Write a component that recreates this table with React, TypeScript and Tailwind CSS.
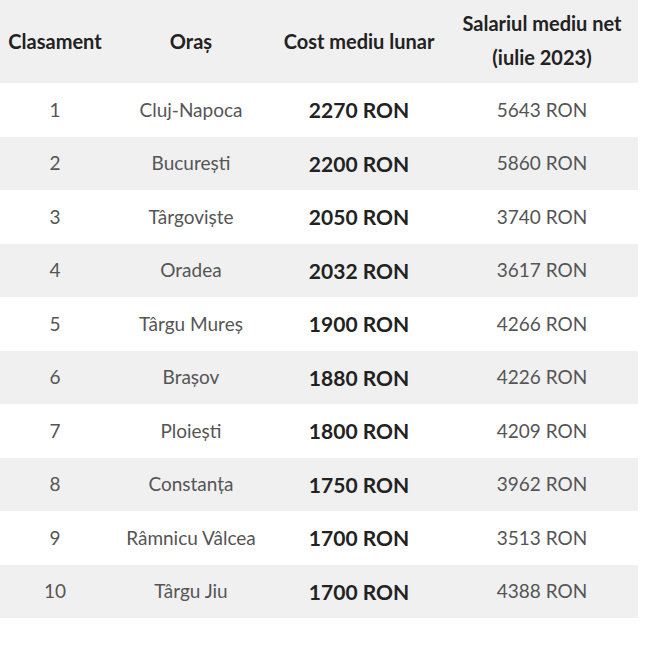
const rows = [
  { rank: 1, city: "Cluj-Napoca", cost: "2270 RON", salary: "5643 RON" },
  { rank: 2, city: "București", cost: "2200 RON", salary: "5860 RON" },
  { rank: 3, city: "Târgoviște", cost: "2050 RON", salary: "3740 RON" },
  { rank: 4, city: "Oradea", cost: "2032 RON", salary: "3617 RON" },
  { rank: 5, city: "Târgu Mureș", cost: "1900 RON", salary: "4266 RON" },
  { rank: 6, city: "Brașov", cost: "1880 RON", salary: "4226 RON" },
  { rank: 7, city: "Ploiești", cost: "1800 RON", salary: "4209 RON" },
  { rank: 8, city: "Constanța", cost: "1750 RON", salary: "3962 RON" },
  { rank: 9, city: "Râmnicu Vâlcea", cost: "1700 RON", salary: "3513 RON" },
  { rank: 10, city: "Târgu Jiu", cost: "1700 RON", salary: "4388 RON" },
];

export default function App() {
  return (
    <div className="bg-white w-[650px] h-[650px]" style={{ fontFamily: "Lato, 'Noto Sans', sans-serif" }}>
      <table className="w-[638px] table-fixed border-collapse text-center">
        <colgroup>
          <col className="w-[110px]" />
          <col className="w-[162px]" />
          <col className="w-[174px]" />
          <col className="w-[192px]" />
        </colgroup>
        <thead>
          <tr className="bg-[#f0f0f0] h-[83px] text-[20px] font-bold text-[#222] leading-[34px]">
            <th className="pb-[2px]">Clasament</th>
            <th className="pb-[2px]">Oraș</th>
            <th className="pb-[2px]">Cost mediu lunar</th>
            <th className="pb-[4px]">
              Salariul mediu net
              <br />
              (iulie 2023)
            </th>
          </tr>
        </thead>
        <tbody>
          {rows.map((r, i) => (
            <tr
              key={r.rank}
              className={`h-[53.5px] text-[19px] ${i % 2 === 1 ? "bg-[#f0f0f0]" : "bg-white"}`}
            >
              <td className="text-[#555]">{r.rank}</td>
              <td className="text-[#555]">{r.city}</td>
              <td className="font-bold text-[21px] text-[#222]">{r.cost}</td>
              <td className="text-[#555]">{r.salary}</td>
            </tr>
          ))}
        </tbody>
      </table>
    </div>
  );
}
